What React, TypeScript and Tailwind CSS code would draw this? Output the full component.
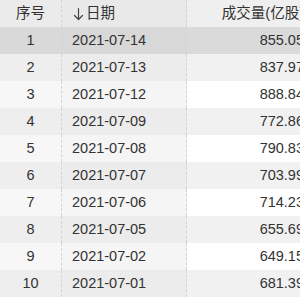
const rows = [
  { id: 1, date: "2021-07-14", vol: "855.05" },
  { id: 2, date: "2021-07-13", vol: "837.97" },
  { id: 3, date: "2021-07-12", vol: "888.84" },
  { id: 4, date: "2021-07-09", vol: "772.86" },
  { id: 5, date: "2021-07-08", vol: "790.83" },
  { id: 6, date: "2021-07-07", vol: "703.99" },
  { id: 7, date: "2021-07-06", vol: "714.23" },
  { id: 8, date: "2021-07-05", vol: "655.69" },
  { id: 9, date: "2021-07-02", vol: "649.15" },
  { id: 10, date: "2021-07-01", vol: "681.39" },
];

const App = () => {
  return (
    <div className="w-[300px] h-[300px] overflow-hidden bg-white font-['Liberation_Sans','Noto_Sans_CJK_SC',sans-serif] text-[14.5px] text-[#333]">
      <div className="w-[314px]">
        {/* header */}
        <div className="grid grid-cols-[62px_125px_127px] h-[27px] bg-[#ebebeb]">
          <div className="flex items-center justify-center border-r border-dashed border-[#d4d4d4]">序号</div>
          <div className="flex items-center pl-[11px] bg-[#e9e9e9] border-r border-dashed border-[#d4d4d4]">
            {/* sort arrow */}
            <svg width="11" height="14" viewBox="0 0 11 14" className="mr-[2px]" fill="none" stroke="#444" strokeWidth="1.2" strokeLinecap="round" strokeLinejoin="round">
              <path d="M5.5 1.5v11M1.5 8.5l4 4 4-4" />
            </svg>
            日期
          </div>
          <div className="flex items-center justify-end pr-[10px] bg-[#efefef] whitespace-nowrap">成交量(亿股)</div>
        </div>

        {rows.map((r) => {
          const selected = r.id === 1;
          const even = r.id % 2 === 0;
          const c1 = selected ? "bg-[#d9d9d9]" : even ? "bg-[#eeeeee]" : "bg-[#f7f7f7]";
          const c2 = selected ? "bg-[#d8d8d8]" : even ? "bg-[#ececec]" : "bg-[#f5f5f5]";
          const c3 = selected ? "bg-[#dadada]" : even ? "bg-[#f1f1f1]" : "bg-white";
          return (
            <div key={r.id} className="grid grid-cols-[62px_125px_127px] h-[27px]">
              <div className={`flex items-center justify-center border-r border-dashed border-[#d4d4d4] ${c1}`}>{r.id}</div>
              <div className={`flex items-center pl-[10px] border-r border-dashed border-[#d4d4d4] ${c2}`}>{r.date}</div>
              <div className={`flex items-center justify-end pr-[10px] ${c3}`}>{r.vol}</div>
            </div>
          );
        })}
      </div>
    </div>
  );
};

export default App;
